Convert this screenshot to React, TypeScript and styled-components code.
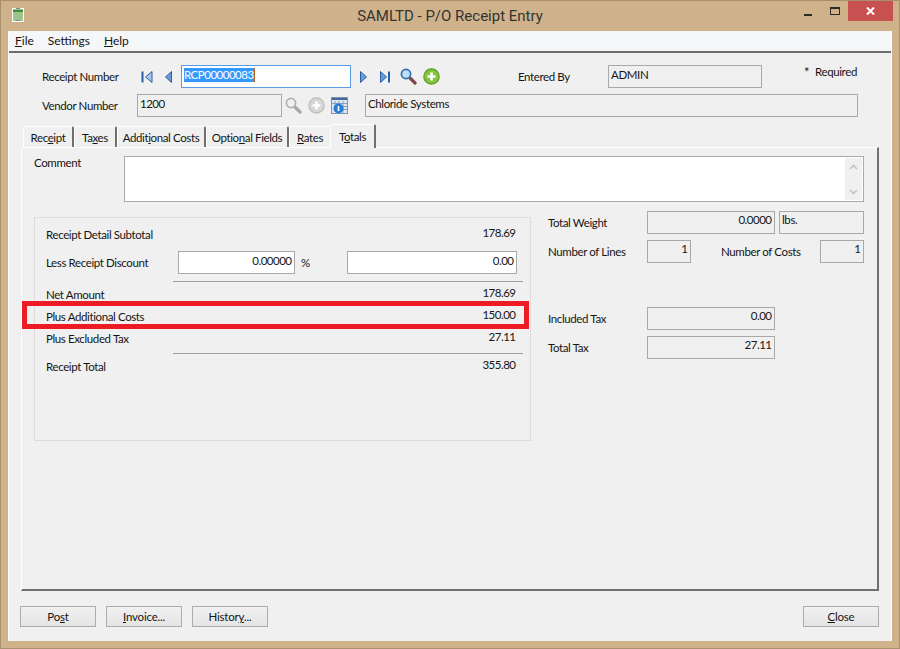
import styled, { createGlobalStyle } from "styled-components";

const Global = createGlobalStyle`
  html, body { margin: 0; padding: 0; }
  body {
    width: 900px;
    height: 649px;
    overflow: hidden;
    font-family: Lato, "Liberation Sans", Arial, sans-serif;
    font-size: 11.5px;
    letter-spacing: -0.38px;
    color: #151515;
  }
  * { box-sizing: border-box; }
  u { text-underline-offset: 1px; }
`;

const Frame = styled.div`
  width: 900px;
  height: 649px;
  background: #cfb28a;
  border: 1px solid #a8906f;
  display: flex;
  flex-direction: column;
  padding: 0 7px 7px 7px;
`;
const TitleBar = styled.div`
  height: 30px;
  flex: none;
  position: relative;
  display: flex;
  align-items: center;
  justify-content: center;
  font-family: Roboto, "Liberation Sans", sans-serif;
  font-size: 15px;
  letter-spacing: 0;
  color: #333;
`;
const AppIcon = styled.svg`
  position: absolute;
  left: 4px;
  top: 7px;
`;
const WindowButtons = styled.div`
  position: absolute;
  right: -1px;
  top: 0;
  display: flex;
  align-items: flex-start;
`;
const WinButton = styled.div<{ $close?: boolean; $low?: boolean }>`
  width: ${(p) => (p.$close ? "45px" : "27px")};
  height: 20px;
  background: ${(p) => (p.$close ? "#c75050" : "transparent")};
  display: flex;
  justify-content: center;
  align-items: ${(p) => (p.$low ? "flex-end" : "center")};
  padding-bottom: ${(p) => (p.$low ? "5px" : "0")};
`;
const Client = styled.div`
  flex: 1;
  background: #f0f0f0;
  border: 1px solid #fff;
  border-width: 0 1px 0 1px;
  display: flex;
  flex-direction: column;
`;
const MenuBar = styled.div`
  height: 22px;
  flex: none;
  background: #f5f6f7;
  border-bottom: 2px solid #6d6d6d;
  display: flex;
  gap: 14px;
  padding: 0 0 0 6px;
  align-items: center;
  font-size: 12px;
  letter-spacing: 0;
`;
const MenuItem = styled.span`
  line-height: 16px;
`;
const Body = styled.div`
  flex: 1;
  display: flex;
  flex-direction: column;
  padding: 12px 12px 0 12px;
`;
const Row = styled.div<{ $top?: number }>`
  display: flex;
  align-items: flex-start;
  height: 23px;
  flex: none;
  margin-top: ${(p) => p.$top ?? 0}px;
`;
const Label = styled.span<{ $w?: number; $left?: number; $top?: number }>`
  flex: none;
  width: ${(p) => (p.$w ? `${p.$w}px` : "auto")};
  margin-left: ${(p) => p.$left ?? 0}px;
  padding-top: ${(p) => p.$top ?? 5}px;
  line-height: 14px;
  white-space: nowrap;
`;
const RequiredMark = styled(Label)`
  font-size: 13px;
`;
const Value = styled.span`
  letter-spacing: -0.5px;
  padding-right: 0.5px;
`;
const Field = styled.div<{ $w: number; $left?: number; $right?: boolean; $white?: boolean; $pad?: number }>`
  flex: none;
  width: ${(p) => p.$w}px;
  height: 23px;
  margin-left: ${(p) => p.$left ?? 0}px;
  border: 1px solid #a9a9a9;
  background: ${(p) => (p.$white ? "#fff" : "#f0f0f0")};
  text-align: ${(p) => (p.$right ? "right" : "left")};
  padding: ${(p) => p.$pad ?? 2}px 2px 0 2px;
  line-height: 14px;
  white-space: nowrap;
`;
const ActiveField = styled(Field)`
  border-color: #569de5;
  background: #fff;
`;
const Selected = styled.span`
  background: #3399ff;
  color: #fff;
  display: inline-block;
  line-height: 14px;
  border-right: 1px solid #b5651d;
  letter-spacing: -0.5px;
`;
const IconGroup = styled.span`
  flex: none;
  display: flex;
  align-items: center;
  height: 23px;
`;
const IconSlot = styled.svg<{ $left?: number }>`
  flex: none;
  display: block;
  margin-left: ${(p) => p.$left ?? 0}px;
`;
const Tabs = styled.div`
  display: flex;
  height: 23px;
  margin: 7px 0 0 2px;
  align-items: flex-end;
  flex: none;
  position: relative;
  z-index: 1;
`;
const Tab = styled.div<{ $active?: boolean; $w: number }>`
  width: ${(p) => p.$w}px;
  height: ${(p) => (p.$active ? 24 : 21)}px;
  margin-bottom: ${(p) => (p.$active ? -1 : 0)}px;
  margin-left: ${(p) => (p.$active ? -2 : 0)}px;
  position: relative;
  background: #f0f0f0;
  border-top: 1px solid #fff;
  border-left: 1px solid #fff;
  border-right: 2px solid #707070;
  border-radius: 2px 2px 0 0;
  text-align: center;
  line-height: ${(p) => (p.$active ? 24 : 22)}px;
  white-space: nowrap;
`;
const Panel = styled.div`
  height: 444px;
  width: 858px;
  flex: none;
  border-top: 1px solid #fff;
  border-left: 1px solid #fff;
  border-right: 2px solid #707070;
  border-bottom: 2px solid #707070;
  padding: 8px 13px 0 12px;
`;
const CommentRow = styled.div`
  display: flex;
  height: 46px;
`;
const CommentBox = styled.div`
  flex: 1;
  border: 1px solid #a9a9a9;
  background: #fff;
  display: flex;
  justify-content: flex-end;
  padding: 1px;
`;
const ScrollTrack = styled.div`
  width: 17px;
  background: #f0f0f0;
  display: flex;
  flex-direction: column;
  align-items: center;
  justify-content: space-between;
  padding: 6px 0 5px;
`;
const Columns = styled.div`
  display: flex;
  margin-top: 9px;
`;
const TotalsBox = styled.div`
  width: 497px;
  height: 224px;
  flex: none;
  margin-top: 6px;
  border: 1px solid #dcdcdc;
  padding: 0 14px 0 11px;
  position: relative;
`;
const AmountRow = styled.div<{ $h: number; $pad?: number }>`
  height: ${(p) => p.$h}px;
  display: flex;
  justify-content: space-between;
  line-height: 14px;
  padding-top: ${(p) => p.$pad ?? 4}px;
`;
const AmountLabel = styled.span`
  position: relative;
  top: 2px;
`;
const Rule = styled.div<{ $top?: number }>`
  height: 1px;
  background: #a0a0a0;
  margin: ${(p) => p.$top ?? 0}px -7px 0 127px;
`;
const DiscountRow = styled.div`
  display: flex;
  height: 23px;
`;
const Highlight = styled.div`
  position: absolute;
  left: -13px;
  top: 83px;
  width: 507px;
  height: 28px;
  border: 5px solid #ed1c24;
  pointer-events: none;
`;
const SideColumn = styled.div`
  margin-left: 17px;
  flex: 1;
  display: flex;
  flex-direction: column;
`;
const Footer = styled.div`
  display: flex;
  padding: 15px 0 0 0;
  margin-left: -1px;
  gap: 10px;
`;
const Button = styled.div<{ $push?: boolean }>`
  width: 76px;
  height: 21px;
  border: 1px solid #acacac;
  background: linear-gradient(#f0f0f0, #e5e5e5);
  text-align: center;
  line-height: 20px;
  letter-spacing: -0.2px;
  margin-left: ${(p) => (p.$push ? "auto" : "0")};
`;

const FirstIcon = () => (
  <IconSlot width="13" height="14" viewBox="0 0 13 14">
    <path d="M1.5 1.5v11" stroke="#2a5fa8" strokeWidth="2" />
    <path d="M11 1.5v11L4.5 7z" fill="#a9c6ea" stroke="#2a5fa8" />
  </IconSlot>
);
const PrevIcon = () => (
  <IconSlot width="9" height="14" viewBox="0 0 9 14" $left={10}>
    <path d="M7.5 1.5v11L1.5 7z" fill="#6d9bd8" stroke="#2a5fa8" />
  </IconSlot>
);
const NextIcon = () => (
  <IconSlot width="9" height="14" viewBox="0 0 9 14" $left={8}>
    <path d="M1.5 1.5v11L7.5 7z" fill="#6d9bd8" stroke="#2a5fa8" />
  </IconSlot>
);
const LastIcon = () => (
  <IconSlot width="12" height="14" viewBox="0 0 12 14" $left={11}>
    <path d="M1.5 1.5v11L7.5 7z" fill="#6d9bd8" stroke="#2a5fa8" />
    <path d="M10 1.5v11" stroke="#2a5fa8" strokeWidth="2" />
  </IconSlot>
);
const Magnifier = ({ grey, left }: { grey?: boolean; left: number }) => (
  <IconSlot width="17" height="17" viewBox="0 0 17 17" $left={left}>
    <path d="M10 10l5 5" stroke={grey ? "#a8a8a8" : "#7d4a4e"} strokeWidth="3.2" strokeLinecap="round" />
    <circle cx="6" cy="6" r="4.6" fill={grey ? "#f0f0f0" : "#bfe0f7"} stroke={grey ? "#b0b0b0" : "#2f6fb0"} strokeWidth="1.7" />
  </IconSlot>
);
const PlusIcon = ({ grey, left }: { grey?: boolean; left: number }) => (
  <IconSlot width="17" height="17" viewBox="0 0 17 17" $left={left}>
    <circle cx="8.5" cy="8.5" r="7.7" fill={grey ? "#d6d6d6" : "#86c23a"} stroke={grey ? "#bcbcbc" : "#5a9e22"} strokeWidth="1.2" />
    <path d="M8.5 4.5v8M4.5 8.5h8" stroke="#fff" strokeWidth="2.6" />
  </IconSlot>
);
const InfoIcon = () => (
  <IconSlot width="17" height="17" viewBox="0 0 17 17" $left={6}>
    <rect x="0.5" y="0.5" width="16" height="16" fill="#dfe8f2" stroke="#7c93ad" />
    <path d="M1 1h15v2H1z" fill="#3f6a9c" />
    <path d="M4 4v5M8 4v3M12 4v12M1 6.500h15M12 9.500h4M12 12.500h4" stroke="#8aa0b8" />
    <circle cx="7.500" cy="11.500" r="5" fill="#2a7cd2" />
    <path d="M7.500 9v5" stroke="#fff" strokeWidth="1.700" />
  </IconSlot>
);
const Chevron = ({ up }: { up?: boolean }) => (
  <svg width="9" height="6" viewBox="0 0 9 6">
    <path d={up ? "M1 5l3.5-3.5L8 5" : "M1 1l3.5 3.5L8 1"} fill="none" stroke="#c4c4c4" strokeWidth="1.6" />
  </svg>
);

const App = () => {
  return (
    <>
      <Global />
      <Frame>
        <TitleBar>
          <AppIcon width="12" height="14" viewBox="0 0 12 14">
            <rect width="12" height="14" fill="#fff" />
            <rect x="1" y="1" width="10" height="12" fill="#9cc48f" />
            <rect x="1" y="2" width="10" height="2" fill="#3f8f3f" />
            <rect x="4" y="0" width="4" height="1" fill="#888" />
            <rect x="4" y="12" width="4" height="1" fill="#888" />
          </AppIcon>
          SAMLTD - P/O Receipt Entry
          <WindowButtons>
            <WinButton $low>
              <svg width="8" height="2" viewBox="0 0 8 2">
                <rect width="8" height="2" fill="#2b2b2b" />
              </svg>
            </WinButton>
            <WinButton>
              <svg width="10" height="8" viewBox="0 0 10 8">
                <rect x="0.5" y="0.5" width="9" height="7" fill="none" stroke="#2b2b2b" />
                <rect width="10" height="2" fill="#2b2b2b" />
              </svg>
            </WinButton>
            <WinButton $close>
              <svg width="9" height="8" viewBox="0 0 9 8">
                <path d="M1 0.5l7 7M8 0.5l-7 7" stroke="#fff" strokeWidth="2" />
              </svg>
            </WinButton>
          </WindowButtons>
        </TitleBar>
        <Client>
          <MenuBar>
            <MenuItem><u>F</u>ile</MenuItem>
            <MenuItem>Settings</MenuItem>
            <MenuItem><u>H</u>elp</MenuItem>
          </MenuBar>
          <Body>
            <Row>
              <Label $left={21} $w={99}>Receipt Number</Label>
              <IconGroup>
                <FirstIcon />
                <PrevIcon />
              </IconGroup>
              <ActiveField $w={170} $left={8}><Selected>RCP00000083</Selected></ActiveField>
              <IconGroup>
                <NextIcon />
                <LastIcon />
                <Magnifier left={9} />
                <PlusIcon left={6} />
              </IconGroup>
              <Label $left={78} $w={90}>Entered By</Label>
              <Field $w={154}>ADMIN</Field>
              <RequiredMark $left={42} $w={11} $top={0}>*</RequiredMark>
              <Label $top={0}>Required</Label>
            </Row>
            <Row $top={6}>
              <Label $left={21} $w={95}>Vendor Number</Label>
              <Field $w={145}><Value>1200</Value></Field>
              <IconGroup>
                <Magnifier grey left={3} />
                <PlusIcon grey left={6} />
                <InfoIcon />
              </IconGroup>
              <Field $w={493} $left={17}>Chloride Systems</Field>
            </Row>
            <Tabs>
              <Tab $w={51}>Rec<u>e</u>ipt</Tab>
              <Tab $w={43}>Ta<u>x</u>es</Tab>
              <Tab $w={89}>Addit<u>i</u>onal Costs</Tab>
              <Tab $w={83}>Optio<u>n</u>al Fields</Tab>
              <Tab $w={43}><u>R</u>ates</Tab>
              <Tab $w={46} $active>T<u>o</u>tals</Tab>
            </Tabs>
            <Panel>
              <CommentRow>
                <Label $w={90} $top={0}>Comment</Label>
                <CommentBox>
                  <ScrollTrack><Chevron up /><Chevron /></ScrollTrack>
                </CommentBox>
              </CommentRow>
              <Columns>
                <TotalsBox>
                  <AmountRow $h={33} $pad={8}><AmountLabel>Receipt Detail Subtotal</AmountLabel><Value>178.69</Value></AmountRow>
                  <DiscountRow>
                    <Label $w={132}>Less Receipt Discount</Label>
                    <Field $w={117} $right $white><Value>0.00000</Value></Field>
                    <Label $w={46} $left={6}>%</Label>
                    <Field $w={170} $right $white><Value>0.00</Value></Field>
                  </DiscountRow>
                  <Rule $top={7} />
                  <AmountRow $h={22}><AmountLabel>Net Amount</AmountLabel><Value>178.69</Value></AmountRow>
                  <AmountRow $h={22}><AmountLabel>Plus Additional Costs</AmountLabel><Value>150.00</Value></AmountRow>
                  <AmountRow $h={27}><AmountLabel>Plus Excluded Tax</AmountLabel><Value>27.11</Value></AmountRow>
                  <Rule />
                  <AmountRow $h={22}><AmountLabel>Receipt Total</AmountLabel><Value>355.80</Value></AmountRow>
                  <Highlight />
                </TotalsBox>
                <SideColumn>
                  <Row>
                    <Label $w={99}>Total Weight</Label>
                    <Field $w={128} $right $pad={1}><Value>0.0000</Value></Field>
                    <Field $w={85} $left={4} $pad={1}>lbs.</Field>
                  </Row>
                  <Row $top={6}>
                    <Label $w={99}>Number of Lines</Label>
                    <Field $w={44} $right $pad={1}><Value>1</Value></Field>
                    <Label $w={99} $left={30}>Number of Costs</Label>
                    <Field $w={44} $right $pad={1}><Value>1</Value></Field>
                  </Row>
                  <Row $top={44}>
                    <Label $w={99}>Included Tax</Label>
                    <Field $w={128} $right $pad={1}><Value>0.00</Value></Field>
                  </Row>
                  <Row $top={6}>
                    <Label $w={99}>Total Tax</Label>
                    <Field $w={128} $right $pad={1}><Value>27.11</Value></Field>
                  </Row>
                </SideColumn>
              </Columns>
            </Panel>
            <Footer>
              <Button>Po<u>s</u>t</Button>
              <Button><u>I</u>nvoice...</Button>
              <Button>Histor<u>y</u>...</Button>
              <Button $push><u>C</u>lose</Button>
            </Footer>
          </Body>
        </Client>
      </Frame>
    </>
  );
};
export default App;
